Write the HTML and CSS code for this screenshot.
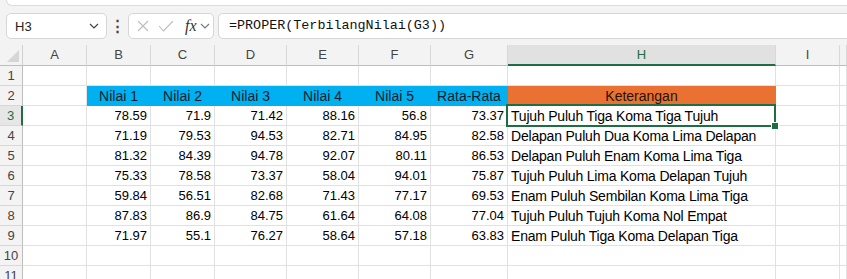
FILE: index.html
```html
<!DOCTYPE html>
<html lang="id">
<head>
  <meta charset="UTF-8" />
  <title>Terbilang Nilai</title>
  <link rel="stylesheet" href="styles.css">
</head>
<body>
  <div class="ribbon-edge"></div>

  <div class="formula-bar">
    <div class="name-box">
      <span>H3</span>
      <svg class="chevron" width="10" height="6" viewBox="0 0 10 6"><path d="M1 1l4 4 4-4" fill="none" stroke="#444" stroke-width="1.2"/></svg>
    </div>
    <div class="dots">⋮</div>
    <div class="fx-box">
      <svg width="12" height="12" viewBox="0 0 12 12"><path d="M1 1l10 10M11 1L1 11" stroke="#bdbdbd" stroke-width="1.1"/></svg>
      <svg width="16" height="12" viewBox="0 0 16 12"><path d="M1 6l4.5 5L15 1" fill="none" stroke="#bdbdbd" stroke-width="1.1"/></svg>
      <span class="fx"><i>f</i><i>x</i></span>
      <svg class="chevron" width="10" height="6" viewBox="0 0 10 6"><path d="M1 1l4 4 4-4" fill="none" stroke="#777" stroke-width="1.1"/></svg>
    </div>
    <div class="formula-input">=PROPER(TerbilangNilai(G3))</div>
  </div>

  <div class="sheet" id="sheet"></div>

  <script>
    const letters = ["A", "B", "C", "D", "E", "F", "G", "H", "I", ""];
    const headers = ["Nilai 1", "Nilai 2", "Nilai 3", "Nilai 4", "Nilai 5", "Rata-Rata"];
    const rows = [
      ["78.59", "71.9", "71.42", "88.16", "56.8", "73.37", "Tujuh Puluh Tiga Koma Tiga Tujuh"],
      ["71.19", "79.53", "94.53", "82.71", "84.95", "82.58", "Delapan Puluh Dua Koma Lima Delapan"],
      ["81.32", "84.39", "94.78", "92.07", "80.11", "86.53", "Delapan Puluh Enam Koma Lima Tiga"],
      ["75.33", "78.58", "73.37", "58.04", "94.01", "75.87", "Tujuh Puluh Lima Koma Delapan Tujuh"],
      ["59.84", "56.51", "82.68", "71.43", "77.17", "69.53", "Enam Puluh Sembilan Koma Lima Tiga"],
      ["87.83", "86.9", "84.75", "61.64", "64.08", "77.04", "Tujuh Puluh Tujuh Koma Nol Empat"],
      ["71.97", "55.1", "76.27", "58.64", "57.18", "63.83", "Enam Puluh Tiga Koma Delapan Tiga"]
    ];

    function cell(cls, text) {
      return `<div class="${cls}">${text || ""}</div>`;
    }

    function render() {
      let html = `<div class="corner"><svg width="12" height="12" viewBox="0 0 12 12"><path d="M12 0V12H0z" fill="#d6d6d6"/></svg></div>`;
      html += letters.map(l => cell(l === "H" ? "col-head active" : "col-head", l)).join("");

      for (let r = 1; r <= 11; r++) {
        html += cell(r === 3 ? "row-head active" : "row-head", r);
        for (let c = 0; c < letters.length; c++) {
          const d = rows[r - 3];
          if (r === 2 && c >= 1 && c <= 6) {
            html += cell("cell blue", headers[c - 1]);
          } else if (r === 2 && c === 7) {
            html += cell("cell orange", "Keterangan");
          } else if (d && c >= 1 && c <= 6) {
            html += cell("cell num", d[c - 1]);
          } else if (d && c === 7) {
            html += cell(r === 3 ? "cell text selected" : "cell text", d[6]);
          } else {
            html += cell("cell", "");
          }
        }
      }
      document.getElementById("sheet").innerHTML = html;
    }

    render();
  </script>
</body>
</html>
```

FILE: styles.css
```css
* {
  box-sizing: border-box;
}
body {
  margin: 0;
  background: #f3f3f3;
  font-family: "Liberation Sans", Arial, sans-serif;
  overflow: hidden;
  height: 279px;
}
.ribbon-edge {
  height: 6px;
  margin: 0 -10px 0 6px;
  background: #fff;
  border: 1px solid #dcdcdc;
  border-top: none;
  border-radius: 0 0 6px 6px;
}
.formula-bar {
  display: flex;
  align-items: center;
  height: 26px;
  margin-top: 7px;
  padding-left: 6px;
}
.name-box {
  display: flex;
  align-items: center;
  justify-content: space-between;
  width: 101px;
  height: 26px;
  padding: 0 7px 0 8px;
  background: #fff;
  border: 1px solid #d6d6d6;
  border-radius: 5px;
  font-size: 13px;
  color: #222;
}
.dots {
  width: 21px;
  text-align: center;
  font-size: 15px;
  font-weight: bold;
  color: #444;
}
.fx-box {
  display: flex;
  align-items: center;
  gap: 9px;
  width: 86px;
  height: 26px;
  padding-left: 8px;
  background: #fff;
  border: 1px solid #d6d6d6;
  border-radius: 5px;
}
.fx {
  font-family: "Liberation Serif", serif;
  font-size: 16px;
  color: #333;
  margin-left: 2px;
  margin-right: -6px;
}
.formula-input {
  flex: 1;
  height: 26px;
  margin-left: 4px;
  margin-right: -10px;
  padding: 4px 0 0 10px;
  background: #fff;
  border: 1px solid #d6d6d6;
  border-radius: 5px;
  font-family: "Liberation Mono", monospace;
  font-size: 13.4px;
  color: #111;
}
.sheet {
  display: grid;
  grid-template-columns: 23px 64px 64px 64px 72px 72px 72px 77px 268px 64px 1fr;
  grid-template-rows: 21px;
  grid-auto-rows: 20px;
  margin-top: 6px;
  background: #fff;
}
.corner {
  display: flex;
  align-items: flex-end;
  justify-content: flex-end;
  padding: 0 3px 3px 0;
  background: #f3f3f3;
  border-right: 1px solid #d0d0d0;
  border-bottom: 1px solid #bdbdbd;
}
.col-head {
  background: #f3f3f3;
  border-right: 1px solid #d8d8d8;
  border-bottom: 1px solid #bdbdbd;
  text-align: center;
  font-size: 13px;
  line-height: 20px;
  color: #444;
}
.col-head.active {
  background: #e1e1e1;
  border-bottom: 2px solid #1f6e43;
  color: #1f6e43;
}
.row-head {
  background: #f3f3f3;
  border-right: 1px solid #bdbdbd;
  border-bottom: 1px solid #d8d8d8;
  text-align: center;
  font-size: 13px;
  line-height: 20px;
  color: #444;
}
.row-head.active {
  background: #e6e6e6;
  border-right: 2px solid #1f6e43;
  color: #1f6e43;
}
.cell {
  border-right: 1px solid #e1e1e1;
  border-bottom: 1px solid #e1e1e1;
  padding: 1px 3px 0;
  line-height: 18px;
  font-size: 14px;
  color: #000;
  white-space: nowrap;
}
.text {
  letter-spacing: -0.2px;
}
.num {
  text-align: right;
  font-size: 13px;
}
.blue {
  background: #00b0f0;
  border-color: #00b0f0;
  text-align: center;
  color: #0e1b2c;
}
.orange {
  background: #e97132;
  border-color: #e97132;
  text-align: center;
  color: #2a1206;
}
.selected {
  position: relative;
}
.selected::after {
  content: "";
  position: absolute;
  left: -2px;
  top: -2px;
  right: -1px;
  bottom: -2px;
  border: 2px solid #1f6e43;
}
.selected::before {
  content: "";
  position: absolute;
  right: -4px;
  bottom: -5px;
  width: 6px;
  height: 6px;
  background: #1f6e43;
  border: 1px solid #fff;
  z-index: 2;
}
```
